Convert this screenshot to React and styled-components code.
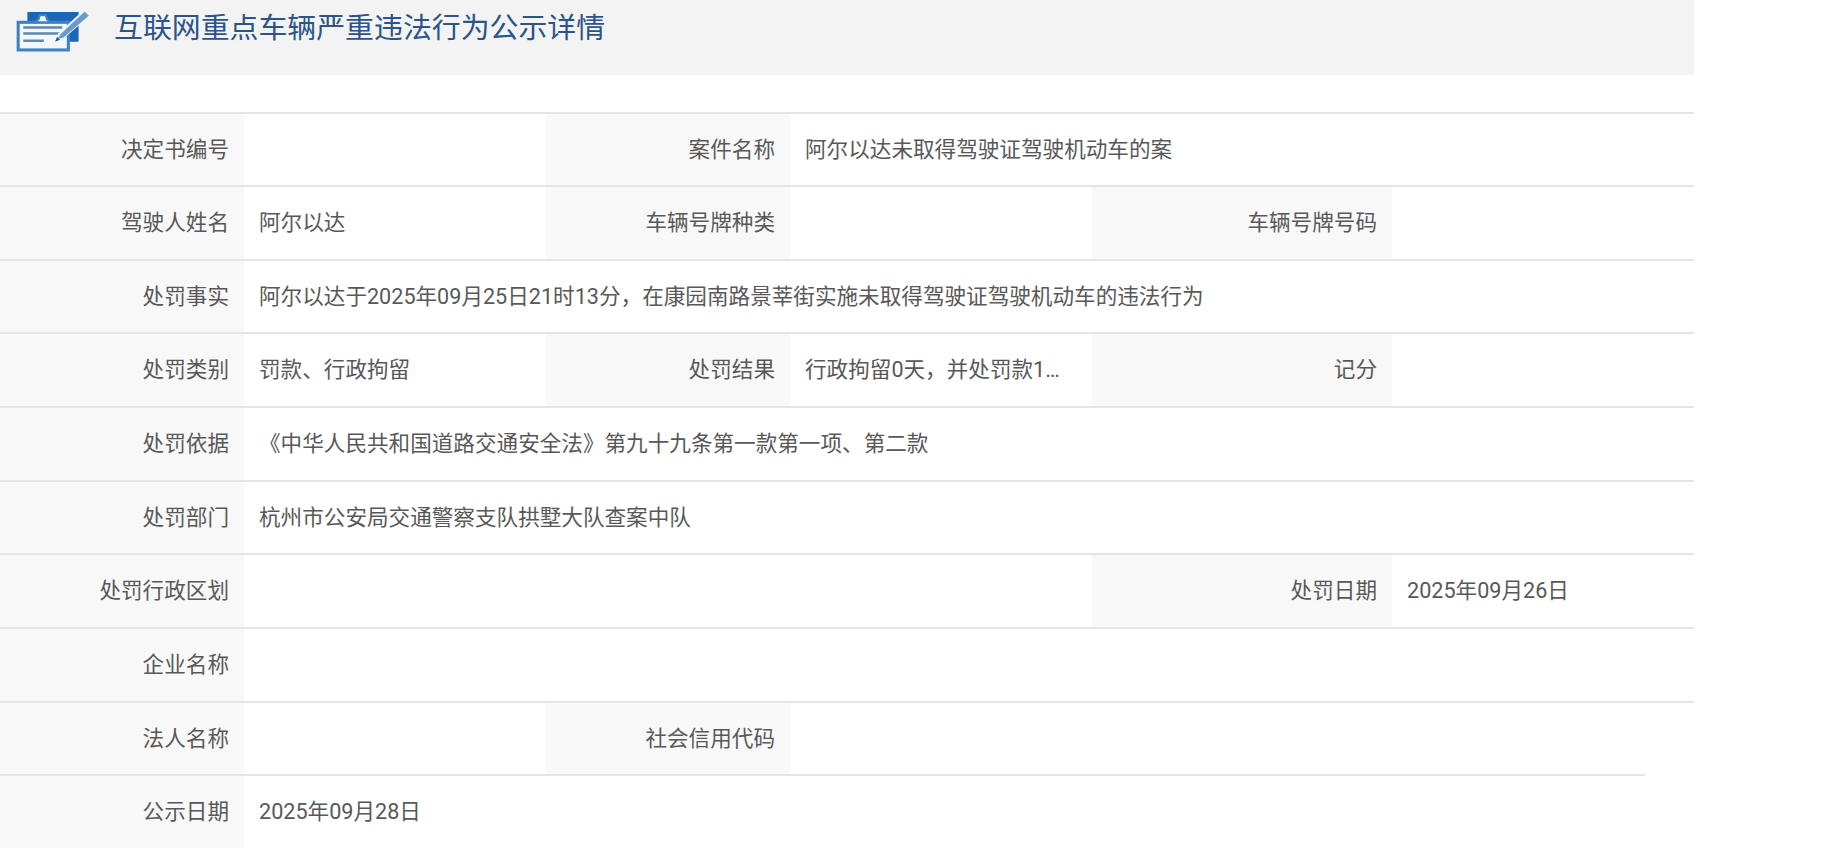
import React from 'react'
import styled, { createGlobalStyle } from 'styled-components'

const GlobalStyle = createGlobalStyle`
    html, body {
        margin: 0;
        background: #fff;
    }
    body {
        font-family: Roboto, "Noto Sans CJK SC", sans-serif;
    }
`

const Page = styled.div`
    width: 1694px;
`

const Header = styled.header`
    height: 75px;
    background: #f3f3f3;
    display: flex;
    align-items: flex-start;
    gap: 23px;
    padding-left: 16px;
    margin-bottom: 36.5px;
`

const Logo = styled.svg`
    width: 75px;
    height: 43px;
    margin-top: 9px;
    flex: none;
`

const Title = styled.h1`
    margin: 0;
    font-size: 28.9px;
    line-height: 56px;
    font-weight: 400;
    color: #2b5488;
    white-space: nowrap;
`

const Row = styled.div`
    display: grid;
    grid-template-columns: ${p => p.$columns};
    height: 73.67px;
    box-sizing: border-box;
    border-top: 2px solid #e5e5e5;
    width: ${p => p.$width || 1694}px;
`

const Label = styled.div`
    background: #f8f8f8;
    color: #585858;
    font-size: 21.6px;
    line-height: 71.6px;
    text-align: right;
    padding-right: 15px;
    white-space: nowrap;
`

const Value = styled.div`
    color: #585858;
    font-size: 21.6px;
    line-height: 71.6px;
    padding: 0 24px 0 15px;
    white-space: nowrap;
    overflow: hidden;
    text-overflow: ellipsis;
`

const FULL = '244px 1fr'
const THREE = '244px 302px 244px 302px 300px 302px'
const TWO = '244px 302px 244px 1fr'
const WIDE = '244px 848px 300px 302px'

const rows = [
    { columns: TWO, cells: ['决定书编号', '', '案件名称', '阿尔以达未取得驾驶证驾驶机动车的案'] },
    { columns: THREE, cells: ['驾驶人姓名', '阿尔以达', '车辆号牌种类', '', '车辆号牌号码', ''] },
    { columns: FULL, cells: ['处罚事实', '阿尔以达于2025年09月25日21时13分，在康园南路景莘街实施未取得驾驶证驾驶机动车的违法行为'] },
    { columns: THREE, cells: ['处罚类别', '罚款、行政拘留', '处罚结果', '行政拘留0天，并处罚款1000元', '记分', ''] },
    { columns: FULL, cells: ['处罚依据', '《中华人民共和国道路交通安全法》第九十九条第一款第一项、第二款'] },
    { columns: FULL, cells: ['处罚部门', '杭州市公安局交通警察支队拱墅大队查案中队'] },
    { columns: WIDE, cells: ['处罚行政区划', '', '处罚日期', '2025年09月26日'] },
    { columns: FULL, cells: ['企业名称', ''] },
    { columns: TWO, cells: ['法人名称', '', '社会信用代码', ''] },
    { columns: FULL, width: 1645, cells: ['公示日期', '2025年09月28日'] },
]

function FormIcon() {
    return (
        <Logo viewBox="0 0 73 42">
            {/* back sheet */}
            <path d="M11 3h50v29H51v-4H11z" fill="#1c66b8" />
            {/* front form */}
            <rect x="2" y="13" width="49" height="27" fill="#f3f7fb" stroke="#3c82c6" strokeWidth="3" />
            {/* clip */}
            <path d="M18 13l4-3 1-4h6l1 4 4 3z" fill="#f3f7fb" stroke="#3c82c6" strokeWidth="2" />
            <path d="M7 18h38M7 24h38M7 31h20" stroke="#5f88ad" strokeWidth="2.5" fill="none" />
            {/* pen */}
            <path d="M38 32l3-8L67 0l6 6-27 23z" fill="#f3f7fb" />
            <path d="M41 29l2-4L67 2.500l4 4-25 21.500z" fill="#6b9bc8" />
            <path d="M38 32l2-5 3 3z" fill="#2f5b88" />
        </Logo>
    )
}

function App() {
    return (
        <Page>
            <GlobalStyle />
            <Header>
                <FormIcon />
                <Title>互联网重点车辆严重违法行为公示详情</Title>
            </Header>
            {rows.map(row => (
                <Row key={row.cells[0]} $columns={row.columns} $width={row.width}>
                    {row.cells.map((text, i) => (
                        i % 2 === 0 ? <Label key={i}>{text}</Label> : <Value key={i}>{text}</Value>
                    ))}
                </Row>
            ))}
        </Page>
    )
}

export default App
